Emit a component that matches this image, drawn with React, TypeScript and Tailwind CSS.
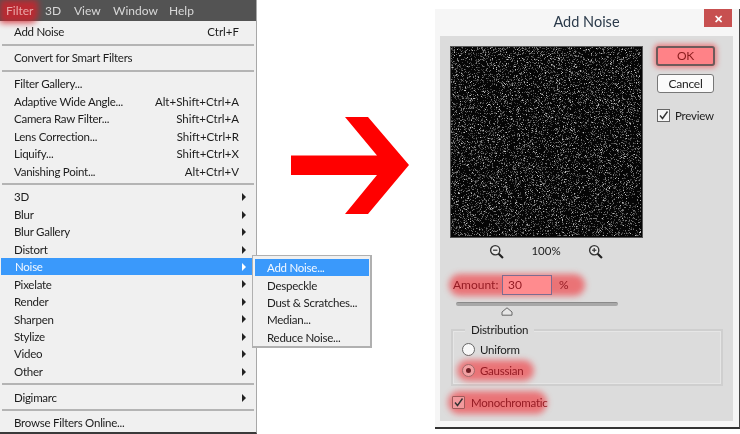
import React from "react";

const FONT = "[font-family:'Lato','Noto_Sans',sans-serif]";

type Row = { t: "sep"; h: string } | { t: "item"; label: string; sc?: string; sub?: boolean; active?: boolean };
const i = (label: string, sc?: string): Row => ({ t: "item", label, sc });
const s = (label: string, active?: boolean): Row => ({ t: "item", label, sub: true, active });
const sep: Row = { t: "sep", h: "h-[8.5px]" };
const lastSep: Row = { t: "sep", h: "h-[7.5px]" };

const rows: Row[] = [
  i("Add Noise", "Ctrl+F"),
  sep,
  i("Convert for Smart Filters"),
  sep,
  i("Filter Gallery..."),
  i("Adaptive Wide Angle...", "Alt+Shift+Ctrl+A"),
  i("Camera Raw Filter...", "Shift+Ctrl+A"),
  i("Lens Correction...", "Shift+Ctrl+R"),
  i("Liquify...", "Shift+Ctrl+X"),
  i("Vanishing Point...", "Alt+Ctrl+V"),
  sep,
  s("3D"),
  s("Blur"),
  s("Blur Gallery"),
  s("Distort"),
  s("Noise", true),
  s("Pixelate"),
  s("Render"),
  s("Sharpen"),
  s("Stylize"),
  s("Video"),
  s("Other"),
  sep,
  s("Digimarc"),
  lastSep,
  i("Browse Filters Online..."),
];

function Noise() {
  const dots: React.ReactNode[] = [];
  let seed = 12345;
  const r = () => {
    seed = (seed * 1664525 + 1013904223) >>> 0;
    return seed / 4294967296;
  };
  for (let n = 0; n < 11500; n++) {
    const v = r();
    const g = v < 0.6 ? 60 : v < 0.94 ? 115 : 190;
    dots.push(
      <rect key={n} x={Math.floor(r() * 190)} y={Math.floor(r() * 189)} width={1} height={1} fill={`rgb(${g},${g},${g})`} />
    );
  }
  return (
    <svg width="191" height="190" viewBox="0 0 191 190" className="block bg-[#060606] shrink-0" shapeRendering="crispEdges">
      {dots}
    </svg>
  );
}

function Glow({ className }: { className: string }) {
  return <span className={`absolute rounded-full bg-[#f0474c] blur-[3px] opacity-70 ${className}`} />;
}

function Check({ className }: { className: string }) {
  return (
    <span className={`flex items-center justify-center w-[13px] h-[13px] border shrink-0 ${className}`}>
      <svg width="11" height="11" viewBox="0 0 11 11">
        <path d="M2 5.5 L4.5 8.5 L9.5 1.5" fill="none" stroke="#333" strokeWidth="1.4" />
      </svg>
    </span>
  );
}

function Magnifier({ plus }: { plus?: boolean }) {
  return (
    <svg width="15" height="15" viewBox="0 0 14 14" className="shrink-0">
      <circle cx="5.8" cy="5.8" r="4.3" fill="#e8e8e8" stroke="#333" strokeWidth="1.3" />
      <path d="M3.8 5.8 H7.8" stroke="#333" strokeWidth="1.1" />
      {plus && <path d="M5.8 3.8 V7.8" stroke="#333" strokeWidth="1.1" />}
      <path d="M9 9 L13 13" stroke="#222" strokeWidth="2" />
    </svg>
  );
}

export default function App() {
  return (
    <div className={`relative flex w-[740px] h-[434px] overflow-hidden bg-white text-[#1c1c1c] text-[11.5px] tracking-[-0.25px] leading-none blur-[0.3px] ${FONT}`}>
      {/* Menu */}
      <div className="w-[257px] h-[434px] shrink-0 flex flex-col bg-[#f0f0f0] border-r border-[#a8a8a8] border-b-2 border-b-[#3a3a3a]">
        <div className="relative h-[21px] shrink-0 bg-[#535353] flex items-center text-[#d8d8d8] text-[12px] tracking-normal pl-[6px]">
          <span className="absolute left-0 top-0 w-[38px] h-[23px] bg-[#d4202a] blur-[3px] opacity-80 rounded-br-lg" />
          <span className="relative w-[39px] text-[#e9a6a6]">Filter</span>
          <span className="w-[29px]">3D</span>
          <span className="w-[39px]">View</span>
          <span className="w-[56px]">Window</span>
          <span>Help</span>
        </div>
        <div className="flex flex-col pt-[2px]">
          {rows.map((r, n) =>
            r.t === "sep" ? (
              <div key={n} className={`${r.h} flex items-center px-[2px]`}>
                <div className="w-full h-[2px] bg-[#b4b4b4]" />
              </div>
            ) : (
              <div
                key={n}
                className={`relative h-[17.45px] flex items-center pt-[1px] pl-[14px] pr-[13px] ${r.active ? "bg-[#3a99fb] text-[#f2f8ff] ml-[1px]" : ""}`}
              >
                <span className="flex-1">{r.label}</span>
                {r.sc && <span className="mr-[4px] tracking-[0px]">{r.sc}</span>}
                {r.sub && (
                  <span className={`w-0 h-0 border-y-[4px] border-y-transparent border-l-[4px] mr-[-3px] ${r.active ? "border-l-white" : "border-l-[#222]"}`} />
                )}
                {r.active && (
                  <div className="absolute left-[251px] top-[-3px] w-[120px] h-[93px] z-10 flex flex-col pt-[3px] pl-[2px] pr-[1px] bg-[#f0f0f0] border border-[#b0b0b0] border-b-2 border-r-2 text-[#1c1c1c]">
                    {["Add Noise...", "Despeckle", "Dust & Scratches...", "Median...", "Reduce Noise..."].map((x, k) => (
                      <div key={x} className={`h-[17.4px] shrink-0 flex items-center pt-[1px] pl-[12px] ${k === 0 ? "bg-[#3a99fb] text-[#f2f8ff]" : ""}`}>
                        {x}
                      </div>
                    ))}
                  </div>
                )}
              </div>
            )
          )}
        </div>
      </div>

      {/* Arrow */}
      <div className="w-[178px] shrink-0">
        <svg width="178" height="434" viewBox="257 0 178 434">
          <polygon points="291,155.5 377,155.5 345,117 368,117 409,165 368,214 345,214 377,175 291,175" fill="#ff0000" />
        </svg>
      </div>

      {/* Dialog */}
      <div className="w-[305px] shrink-0 flex flex-col">
        <div className="mt-[9px] w-[305px] h-[420px] bg-[#f6f6f6] flex flex-col pl-[5px] pr-[6px] pb-[6px] border-b-2 border-b-[#333] border-r border-r-[#444]">
          <div className="relative h-[27px] shrink-0 flex items-center justify-center text-[#2b3a4a] text-[14.5px] tracking-normal">
            Add Noise
            <span className="absolute right-[1px] top-0 w-[28px] h-[18px] bg-[#c75050] flex items-center justify-center text-white text-[11px] font-bold">✕</span>
          </div>
          <div className="flex-1 bg-[#dcdcdc] flex flex-col pt-[10px] pl-[10px] pr-[10px]">
            <div className="flex items-start">
              <div className="border border-[#555] leading-none"><Noise /></div>
              <div className="ml-[13px] flex flex-col items-start">
                <div className="w-[59px] h-[20px] rounded-[3px] bg-[#ff8287] border-2 border-[#6e5a5a] shadow-[0_0_5px_2px_rgba(240,70,75,0.6)] flex items-center justify-center text-[#8a1c1c] text-[12px]">OK</div>
                <div className="w-[57px] h-[19px] mt-[8px] ml-[1px] rounded-[3px] bg-[#fbfbfb] border border-[#777] flex items-center justify-center text-[12px]">Cancel</div>
                <div className="flex items-center gap-[5px] mt-[16px] ml-[1px]">
                  <Check className="bg-[#f6f6f6] border-[#666]" />
                  <span>Preview</span>
                </div>
              </div>
            </div>
            <div className="flex items-center h-[14px] mt-[6px] pl-[39px]">
              <Magnifier />
              <span className="w-[84px] text-center tracking-normal">100%</span>
              <Magnifier plus />
            </div>
            <div className="relative flex items-center h-[20px] mt-[17px] ml-[3px] text-[#951c24] text-[12px] tracking-normal">
              <Glow className="left-[-4px] top-[-1px] w-[136px] h-[22px]" />
              <span className="relative w-[49px]">Amount:</span>
              <span className="relative w-[50px] h-[20px] flex items-center pl-[5px] bg-[#ff8b8e] border border-[#7d6c90]">30</span>
              <span className="relative ml-[7px]">%</span>
            </div>
            <div className="relative h-[4px] w-[162px] mt-[7px] ml-[6px] rounded-full bg-[#a8a8a8] border-t border-[#8a8a8a]">
              <svg className="absolute left-[45px] top-[4px]" width="12" height="9" viewBox="0 0 12 9">
                <path d="M6 .8 L11 5 V8.2 H1 V5 Z" fill="#e6e6e6" stroke="#666" />
              </svg>
            </div>
            <div className="relative h-[57px] w-[272px] mt-[23px] ml-[1px] border-2 border-[#cfcfcf] shadow-[inset_0_0_0_1px_#e6e6e6] flex flex-col pt-[12px] pl-[9px] gap-[8px]">
              <span className="absolute left-[12px] top-[-7px] px-[6px] bg-[#dcdcdc]">Distribution</span>
              <div className="flex items-center gap-[5px] h-[13px]">
                <span className="w-[13px] h-[13px] rounded-full bg-[#f8f8f8] border border-[#666] shrink-0" />
                <span>Uniform</span>
              </div>
              <div className="relative flex items-center gap-[5px] h-[13px] text-[#951c24]">
                <Glow className="left-[-5px] top-[-4px] w-[77px] h-[21px]" />
                <span className="relative w-[13px] h-[13px] rounded-full bg-[#f2a0a2] border border-[#a06a6a] shrink-0 flex items-center justify-center">
                  <span className="w-[5px] h-[5px] rounded-full bg-[#6e1f25]" />
                </span>
                <span className="relative">Gaussian</span>
              </div>
            </div>
            <div className="relative flex items-center gap-[6px] h-[13px] mt-[10px] ml-[2px] text-[#951c24]">
              <Glow className="left-[-4px] top-[-5px] w-[99px] h-[23px]" />
              <Check className="relative bg-[#f29a9d] border-[#a05a5a] rounded-[1px]" />
              <span className="relative">Monochromatic</span>
            </div>
          </div>
        </div>
      </div>
    </div>
  );
}
